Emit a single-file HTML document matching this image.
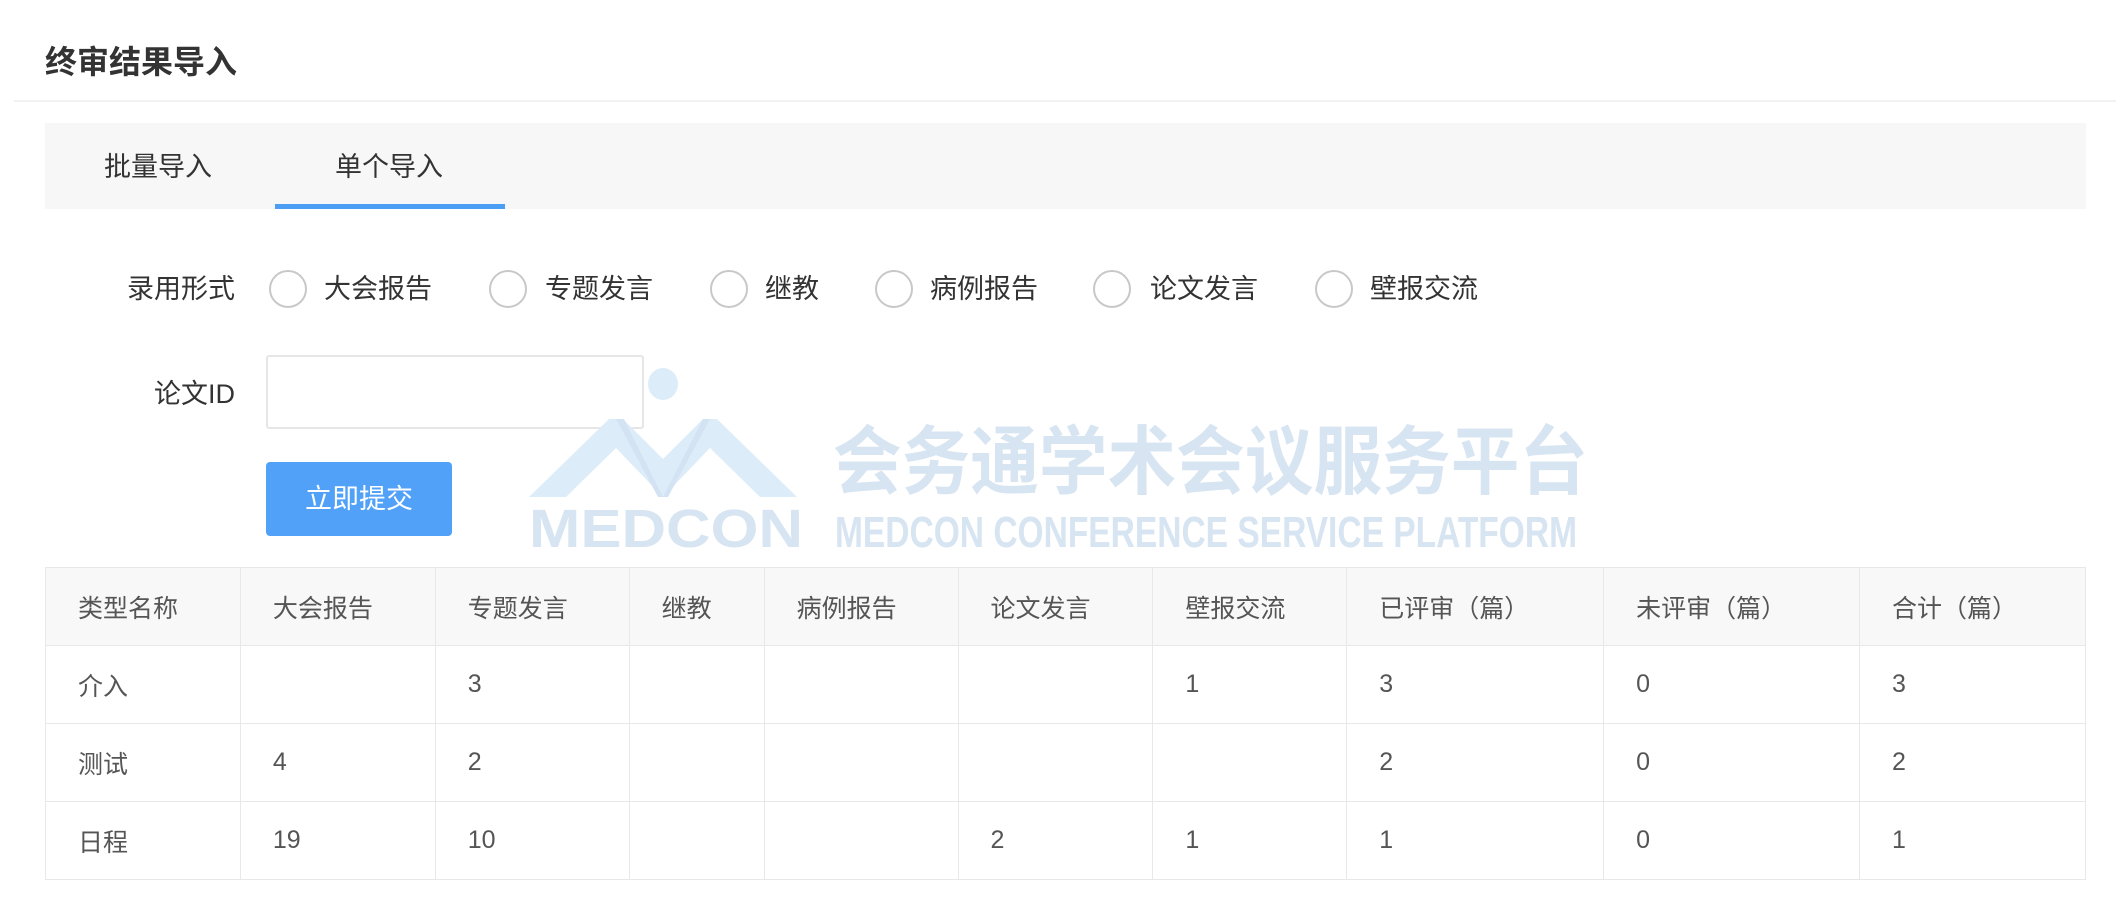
<!DOCTYPE html>
<html><head><meta charset="utf-8"><style>
*{margin:0;padding:0;box-sizing:border-box}
body{width:2116px;height:916px;background:#fff;font-family:"Liberation Sans","Noto Sans CJK SC",sans-serif;color:#333;position:relative;overflow:hidden}
.abs{position:absolute}
.title{left:45px;top:43px;font-size:32px;font-weight:bold;color:#333;line-height:38px}
.div{left:14px;right:0;top:100px;height:2px;background:#f2f2f2}
.tabs{left:45px;width:2041px;top:123px;height:86px;background:#f7f7f7}
.tab{font-size:27px;line-height:40px;top:147px;color:#333}
.ul{left:275px;width:230px;top:204px;height:5px;background:#4c9ef5}
.lbl{font-size:27px;line-height:40px;color:#333;text-align:right;width:120px}
.rad{width:38px;height:38px;border:2px solid #c8c8c8;border-radius:50%;top:270px}
.rl{font-size:27px;line-height:40px;top:269px;color:#333}
.inp{left:266px;top:355px;width:378px;height:74px;border:2px solid #e6e6e6;border-radius:3px}
.btn{left:266px;top:462px;width:186px;height:74px;background:#51a1f8;border-radius:4px;color:#fff;font-size:27px;line-height:74px;text-align:center}
table{position:absolute;left:45px;top:567px;width:2041px;border-collapse:collapse;font-size:25px;color:#555}
td{border:1.5px solid #e8e8e8;height:78px;padding-left:32px;vertical-align:middle}
tr.h td{background:#f8f8f8}
</style></head><body>
<div class="abs title">终审结果导入</div>
<div class="abs div"></div>
<div class="abs tabs"></div>
<div class="abs tab" style="left:104px">批量导入</div>
<div class="abs tab" style="left:335px">单个导入</div>
<div class="abs ul"></div>
<div class="abs lbl" style="left:115px;top:269px">录用形式</div>
<div class="abs rad" style="left:269px"></div><div class="abs rl" style="left:324px">大会报告</div>
<div class="abs rad" style="left:489px"></div><div class="abs rl" style="left:545px">专题发言</div>
<div class="abs rad" style="left:710px"></div><div class="abs rl" style="left:765px">继教</div>
<div class="abs rad" style="left:875px"></div><div class="abs rl" style="left:930px">病例报告</div>
<div class="abs rad" style="left:1093px"></div><div class="abs rl" style="left:1150px">论文发言</div>
<div class="abs rad" style="left:1315px"></div><div class="abs rl" style="left:1370px">壁报交流</div>
<div class="abs lbl" style="left:115px;top:374px">论文ID</div>
<div class="abs inp"></div>
<div class="abs btn">立即提交</div>
<table>
<colgroup><col style="width:195px"><col style="width:195px"><col style="width:194px"><col style="width:135px"><col style="width:194px"><col style="width:195px"><col style="width:194px"><col style="width:257px"><col style="width:256px"><col style="width:226px"></colgroup>
<tr class="h"><td>类型名称</td><td>大会报告</td><td>专题发言</td><td>继教</td><td>病例报告</td><td>论文发言</td><td>壁报交流</td><td>已评审（篇）</td><td>未评审（篇）</td><td>合计（篇）</td></tr>
<tr><td>介入</td><td></td><td>3</td><td></td><td></td><td></td><td>1</td><td>3</td><td>0</td><td>3</td></tr>
<tr><td>测试</td><td>4</td><td>2</td><td></td><td></td><td></td><td></td><td>2</td><td>0</td><td>2</td></tr>
<tr><td>日程</td><td>19</td><td>10</td><td></td><td></td><td>2</td><td>1</td><td>1</td><td>0</td><td>1</td></tr>
</table>
<svg class="abs" style="left:0;top:0;pointer-events:none" width="2116" height="916">
<ellipse cx="663" cy="384" rx="15" ry="16" fill="#dcedf9"/>
<polygon points="529,497 609,419 623,419 663,459 703,419 717,419 797,497 760,497 710,448 663,497 616,448 566,497" fill="#dcedf9"/>
<polygon points="616,419 624,419 663,497 658,497" fill="#d3e3f3"/>
<polygon points="703,419 710,419 668,497 663,497" fill="#d3e3f3"/>
<text x="529" y="547" font-family="Liberation Sans" font-weight="bold" font-size="54" fill="#d7e4f1" textLength="274" lengthAdjust="spacingAndGlyphs">MEDCON</text>
<text x="833" y="488" font-family="Noto Sans CJK SC" font-weight="bold" font-size="75" fill="#d7e4f1" textLength="755" lengthAdjust="spacingAndGlyphs">会务通学术会议服务平台</text>
<text x="835" y="547" font-family="Liberation Sans" font-weight="bold" font-size="44" fill="#d7e4f1" textLength="742" lengthAdjust="spacingAndGlyphs">MEDCON CONFERENCE SERVICE PLATFORM</text>
</svg>
</body></html>
